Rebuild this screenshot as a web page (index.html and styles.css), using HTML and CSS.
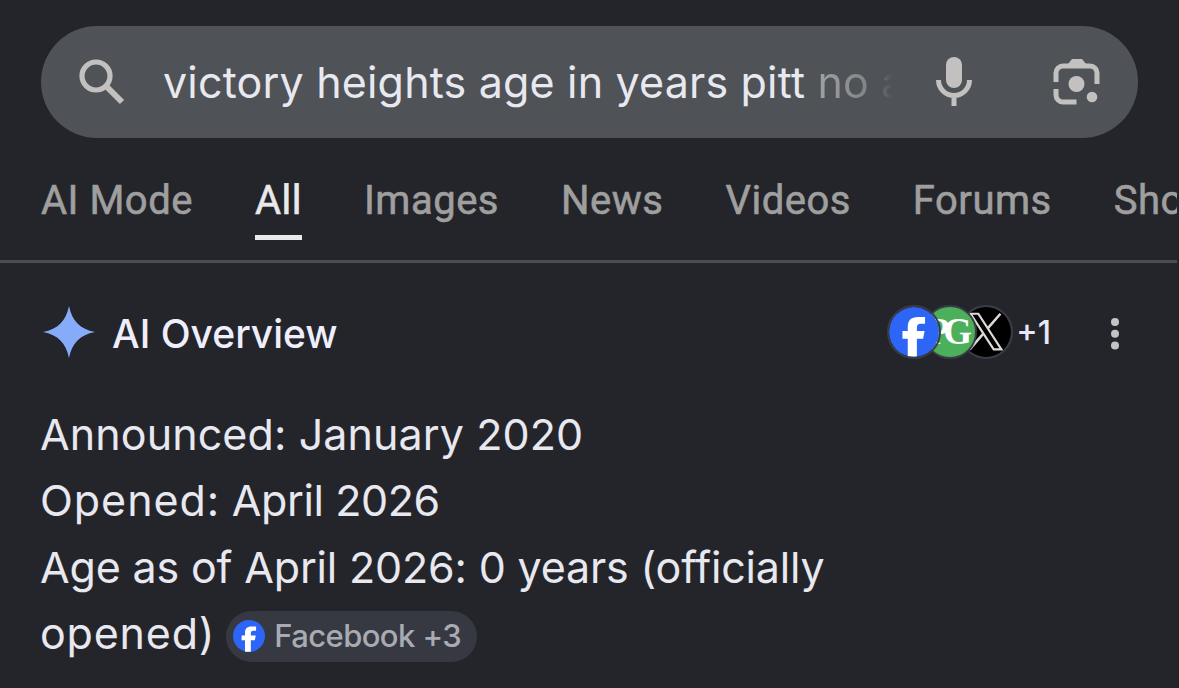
FILE: index.html
```
<!DOCTYPE html>
<html lang="en">
<head>
    <meta charset="UTF-8">
    <meta name="viewport" content="width=device-width, initial-scale=1.0">
    <title>victory heights age in years pitt no a</title>
    <link rel="stylesheet" href="styles.css">
</head>
<body>
    <header class="search">
        <svg class="icon-search" viewBox="0 0 46 46">
            <circle cx="17" cy="17" r="14" fill="none" stroke="#c2c1c0" stroke-width="5.2"/>
            <path d="M27 27 L43 43" stroke="#c2c1c0" stroke-width="6"/>
        </svg>
        <div class="query">victory heights age in years pitt <span class="faded">no a</span></div>
        <svg class="icon-mic" viewBox="0 0 36 50">
            <rect x="10" y="0" width="16" height="31" rx="8" fill="#c2c1c0"/>
            <path d="M2.5 23 a15.5 15.5 0 0 0 31 0 M18 38 V49" fill="none" stroke="#c2c1c0" stroke-width="5"/>
        </svg>
        <svg class="icon-lens" viewBox="0 0 48 48">
            <path d="M15 6 L19 1 H29 L33 6 Z" fill="#c2c1c0"/>
            <path d="M3 24 V15 a7 7 0 0 1 7-7 H37 a7 7 0 0 1 7 7 V26 M3 31 V37 a7 7 0 0 0 7 7 H23.500" fill="none" stroke="#c2c1c0" stroke-width="5"/>
            <circle cx="23.500" cy="26" r="8" fill="#c2c1c0"/>
            <circle cx="39" cy="39" r="5.300" fill="#c2c1c0"/>
        </svg>
    </header>

    <nav class="tabs">
        <a class="tab">AI Mode</a>
        <a class="tab active">All</a>
        <a class="tab">Images</a>
        <a class="tab">News</a>
        <a class="tab">Videos</a>
        <a class="tab">Forums</a>
        <a class="tab">Shopping</a>
    </nav>

    <main class="overview">
        <div class="heading">
            <svg class="icon-spark" viewBox="0 0 52 52">
                <path d="M26 0 C29 15 37 23 52 26 C37 29 29 37 26 52 C23 37 15 29 0 26 C15 23 23 15 26 0 Z" fill="#86acf9"/>
            </svg>
            <h1>AI Overview</h1>
            <div class="sources">
                <svg class="source fb" viewBox="0 0 52 52">
                    <circle cx="26" cy="26" r="26" fill="#2d66f6"/>
                    <path d="M19.500 51.500 V33 H14 V25 H19.500 V21 C19.500 14 23 10.500 30 10.500 H37.500 V17.500 H33 C30 17.500 29 19 29 21.500 V25 H37 L35.500 33 H29 V51.500 Z" fill="#fff"/>
                </svg>
                <span class="source gazette">PG</span>
                <svg class="source x" viewBox="0 0 52 52">
                    <circle cx="26" cy="26" r="26" fill="#000"/>
                    <path d="M10 7 H18 L42 44 H34 Z" fill="#000" stroke="#ddd9d6" stroke-width="2.300"/>
                    <path d="M41 7 L28 22 M23 28 L9 44" stroke="#ddd9d6" stroke-width="2.600"/>
                </svg>
            </div>
            <span class="more">+1</span>
            <svg class="icon-dots" viewBox="0 0 8 32">
                <circle cx="4" cy="4" r="4"/>
                <circle cx="4" cy="15.700" r="4"/>
                <circle cx="4" cy="27.400" r="4"/>
            </svg>
        </div>

        <div class="answer">
            <div class="line one">Announced: January 2020</div>
            <div class="line two"><span class="label">Opened:</span> April 2026</div>
            <div class="line three">Age as of April 2026: 0 years (officially</div>
            <div class="line four">
                <span>opened)</span>
                <span class="chip">
                    <svg class="chip-icon" viewBox="0 0 52 52">
                        <circle cx="26" cy="26" r="26" fill="#2d66f6"/>
                        <path d="M19.500 51.500 V33 H14 V25 H19.500 V21 C19.500 14 23 10.500 30 10.500 H37.500 V17.500 H33 C30 17.500 29 19 29 21.500 V25 H37 L35.500 33 H29 V51.500 Z" fill="#fff"/>
                    </svg>
                    <span class="chip-text">Facebook +3</span>
                </span>
            </div>
        </div>
    </main>
</body>
</html>
```

FILE: styles.css
```
body {
    margin: 0;
    height: 688px;
    overflow: hidden;
    background: #24252a;
    color: #e8e8f0;
    font-family: Inter, "Liberation Sans", sans-serif;
}
svg {
    display: block;
    flex: none;
}
.search {
    display: flex;
    align-items: center;
    height: 112px;
    margin: 26px 41px 0 41px;
    box-sizing: border-box;
    padding-left: 38px;
    border-radius: 56px;
    background: #4f5256;
}
.icon-search {
    width: 46px;
    height: 46px;
}
.query {
    width: 730px;
    margin-left: 38px;
    overflow: hidden;
    white-space: nowrap;
    font-size: 43px;
    line-height: 60px;
    letter-spacing: 0.18px;
}
.faded {
    background: linear-gradient(to right, #a0a2a6 0, #7e8084 55px, #4f5256 76px);
    -webkit-background-clip: text;
    background-clip: text;
    color: transparent;
}
.icon-mic {
    width: 36px;
    height: 50px;
    margin-left: 43px;
}
.icon-lens {
    width: 48px;
    height: 48px;
    margin-left: 81px;
}
.tabs {
    display: flex;
    gap: 62px;
    height: 125px;
    box-sizing: border-box;
    padding: 39px 0 0 41px;
    border-bottom: 3px solid #4c4d51;
    margin-right: 2px;
    overflow: hidden;
    white-space: nowrap;
    color: #9f9f9f;
}
.tab {
    height: 63px;
    box-sizing: border-box;
    font-family: Roboto, sans-serif;
    font-size: 40px;
    line-height: 47px;
    font-weight: 400;
    letter-spacing: 0.5px;
    -webkit-text-stroke: 0.6px currentColor;
}
.tab.active {
    border-bottom: 5px solid #e9e9ea;
    color: #e9e9ea;
}
.overview {
    padding: 0 41px;
}
.heading {
    display: flex;
    align-items: center;
    height: 138px;
    padding-left: 2px;
}
.icon-spark {
    width: 52px;
    height: 52px;
}
h1 {
    margin: 0 auto 0 17px;
    padding-top: 2px;
    font-size: 39px;
    font-weight: 500;
    color: #eeeefc;
}
.sources {
    display: flex;
}
.source {
    width: 54px;
    height: 54px;
    box-sizing: border-box;
    border: 2px solid #3a3d47;
    border-radius: 50%;
    margin-right: -18px;
}
.fb {
    position: relative;
    z-index: 3;
}
.gazette {
    position: relative;
    z-index: 2;
    background: #4caf5c;
    color: #fff;
    font: bold 37px/50px "Liberation Serif", serif;
    text-align: center;
    letter-spacing: -6px;
    text-indent: -8px;
}
.more {
    margin-left: 21px;
    font-size: 32px;
    font-weight: 500;
    color: #e8e8f8;
}
.icon-dots {
    width: 8px;
    height: 32px;
    margin: 4px 19px 0 60px;
    fill: #c4c4c5;
}
.answer {
    margin-left: -1px;
    font-size: 43px;
    line-height: 66.3px;
    white-space: nowrap;
}
.line.one {
    letter-spacing: 0.1px;
}
.line.two {
    letter-spacing: -0.4px;
}
.line.two .label {
    letter-spacing: 0.95px;
}
.line.three {
    letter-spacing: -0.17px;
}
.line.four {
    display: flex;
    align-items: center;
    letter-spacing: 0.8px;
}
.chip {
    display: flex;
    align-items: center;
    width: 251px;
    height: 51px;
    box-sizing: border-box;
    margin: 6px 0 0 11px;
    padding-left: 7px;
    border-radius: 26px;
    background: #363941;
    letter-spacing: -0.6px;
}
.chip-icon {
    width: 32px;
    height: 32px;
}
.chip-text {
    margin-left: 9px;
    font-size: 31px;
    font-weight: 500;
    color: #a9abb3;
}
```
